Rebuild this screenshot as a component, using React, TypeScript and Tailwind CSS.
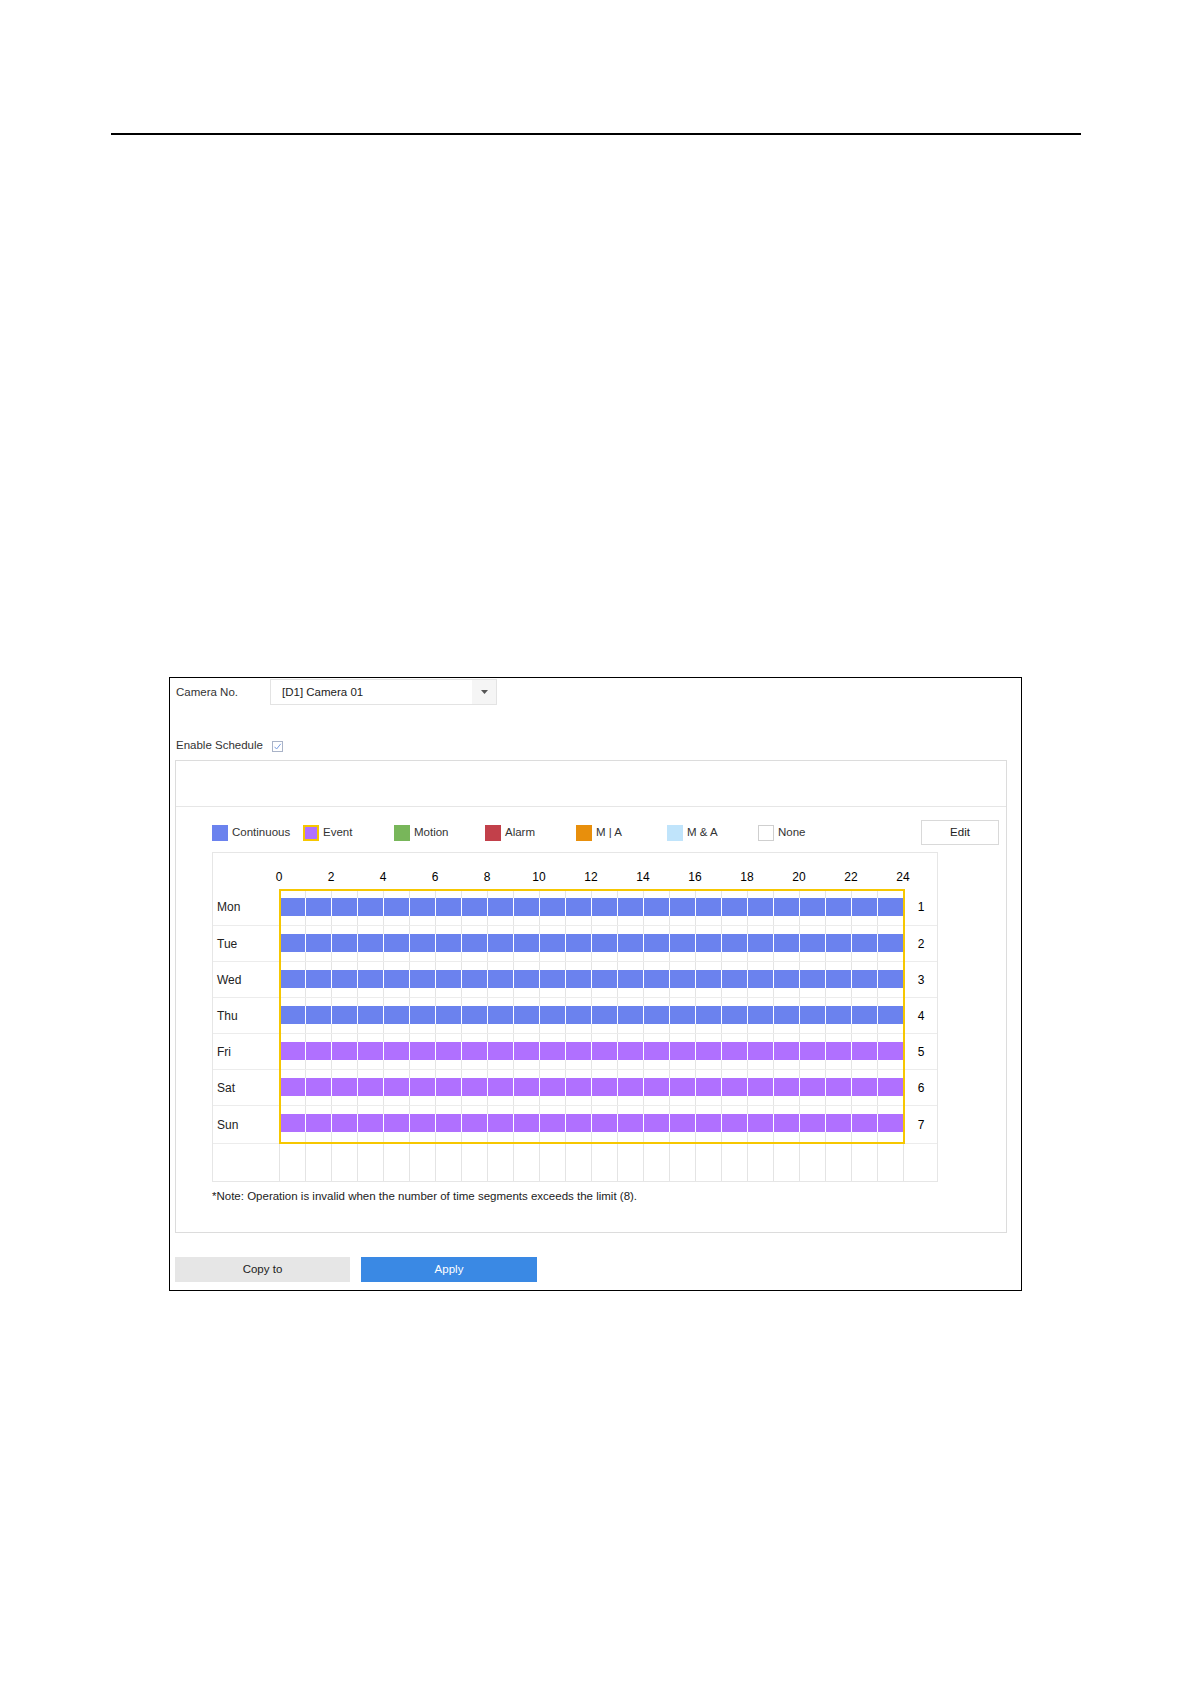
import React from "react";

const days = ["Mon", "Tue", "Wed", "Thu", "Fri", "Sat", "Sun"];
const hours = ["0", "2", "4", "6", "8", "10", "12", "14", "16", "18", "20", "22", "24"];

const legend = [
  { label: "Continuous", box: "bg-[#6b82ee]" },
  { label: "Event", box: "bg-[#b070ff] border-2 border-[#f6c700]" },
  { label: "Motion", box: "bg-[#78b65a]" },
  { label: "Alarm", box: "bg-[#c2404a]" },
  { label: "M | A", box: "bg-[#e88f0c]" },
  { label: "M & A", box: "bg-[#c0e4fb]" },
  { label: "None", box: "bg-white border border-[#cfcfcf]" },
];

// row heights so the grid lines land where the reference draws them
const labelHeights = ["h-[37px]", "h-[36px]", "h-[36px]", "h-[36px]", "h-[36px]", "h-[36px]", "h-[38px]"];
const gridHeights = ["h-[35px]", "h-[36px]", "h-[36px]", "h-[36px]", "h-[36px]", "h-[36px]", "h-[36px]"];

function ScheduleRow({ index }: { index: number }) {
  const color = index < 4 ? "bg-[#6b82ee]" : "bg-[#b070ff]";
  const last = index === 6;
  return (
    <div className={`flex ${gridHeights[index]} ${last ? "" : "border-b border-[#ececec]"}`}>
      {Array.from({ length: 24 }).map((_, h) => (
        <div
          key={h}
          className={`flex flex-col ${h === 0 ? "w-[24px]" : "w-[26px] border-l border-[#e4e4e4]"}`}
        >
          <div
            className={`h-[18px] ${index === 0 ? "mt-[7px]" : "mt-[8px]"} ${color} ${
              h === 0 ? "" : "-ml-px border-l border-white"
            }`}
          />
        </div>
      ))}
    </div>
  );
}

export default function App() {
  return (
    <div className="w-[1192px] h-[1685px] bg-white font-['Liberation_Sans',Arial,sans-serif] text-[#333] text-[11.5px]">
      {/* page header rule */}
      <div className="pt-[133px] pl-[111px]">
        <div className="w-[970px] h-[2px] bg-black" />
      </div>

      {/* screenshot frame */}
      <div className="ml-[169px] mt-[542px] w-[853px] h-[614px] border border-black px-[5px]">
        {/* Camera No. */}
        <div className="mt-px flex items-center h-[26px]">
          <span className="w-[95px] pl-px pt-[2px]">Camera No.</span>
          <div className="flex w-[227px] h-[26px] border border-[#e3e3e3]">
            <span className="flex-1 pl-[11px] leading-[24px] text-[#222]">[D1] Camera 01</span>
            <div className="w-[24px] bg-[#f5f5f5] flex items-center justify-center">
              <svg width="7" height="4" viewBox="0 0 7 4">
                <path d="M0 0h7L3.5 4z" fill="#555" />
              </svg>
            </div>
          </div>
        </div>

        {/* Enable Schedule */}
        <div className="mt-[31px] h-[20px] flex items-center pl-px">
          <span>Enable Schedule</span>
          <span className="ml-[9px] w-[11px] h-[11px] border border-[#a9b3c8] flex items-center justify-center bg-white">
            <svg width="9" height="9" viewBox="0 0 9 9">
              <path d="M1.5 4.8 3.6 7 7.8 1.8" fill="none" stroke="#7a9de0" strokeWidth="1" />
            </svg>
          </span>
        </div>

        {/* schedule panel */}
        <div className="mt-[4px] w-[832px] h-[473px] border border-[#dcdcdc]">
          <div className="h-[46px] border-b border-[#e6e6e6]" />

          {/* legend */}
          <div className="mt-[13px] flex items-center h-[25px] pl-[36px]">
            {legend.map((l) => (
              <div key={l.label} className="w-[91px] flex items-center gap-[4px]">
                <span className={`w-[16px] h-[16px] ${l.box}`} />
                <span>{l.label}</span>
              </div>
            ))}
            <button className="ml-auto mr-[7px] w-[78px] h-[25px] border border-[#d9d9d9] bg-white text-[#222]">
              Edit
            </button>
          </div>

          {/* time table */}
          <div className="mt-[7px] ml-[36px] w-[726px] border border-[#e6e6e6] text-[#222]">
            <div className="flex h-[36px] items-center pt-[12px]">
              <div className="w-[40px]" />
              {hours.map((h) => (
                <div key={h} className="w-[52px] flex justify-center text-[12px] text-black">
                  {h}
                </div>
              ))}
            </div>

            <div className="flex">
              <div className="w-[66px] flex flex-col">
                {days.map((d, i) => (
                  <div key={d} className={`${labelHeights[i]} border-b border-[#ececec] flex items-center pl-[4px] text-[12px]`}>
                    {d}
                  </div>
                ))}
              </div>
              <div className="w-[626px] h-[255px] border-2 border-[#f6c700] flex flex-col">
                {days.map((d, i) => (
                  <ScheduleRow key={d} index={i} />
                ))}
              </div>
              <div className="flex-1 flex flex-col">
                {days.map((d, i) => (
                  <div key={d} className={`${labelHeights[i]} border-b border-[#ececec] flex items-center justify-center text-[12px] text-black`}>
                    {i + 1}
                  </div>
                ))}
              </div>
            </div>

            <div className="flex h-[37px]">
              <div className="w-[66px]" />
              {Array.from({ length: 24 }).map((_, h) => (
                <div key={h} className="w-[26px] border-l border-[#e4e4e4]" />
              ))}
              <div className="w-px bg-[#e4e4e4]" />
            </div>
          </div>

          <p className="mt-[7px] pl-[36px] leading-[14px] text-[#222]">
            *Note: Operation is invalid when the number of time segments exceeds the limit (8).
          </p>
        </div>

        {/* buttons */}
        <div className="mt-[24px] flex gap-[11px]">
          <button className="w-[175px] h-[25px] bg-[#e6e6e6] text-[#222]">Copy to</button>
          <button className="w-[176px] h-[25px] bg-[#3a89e4] text-white">Apply</button>
        </div>
      </div>
    </div>
  );
}
